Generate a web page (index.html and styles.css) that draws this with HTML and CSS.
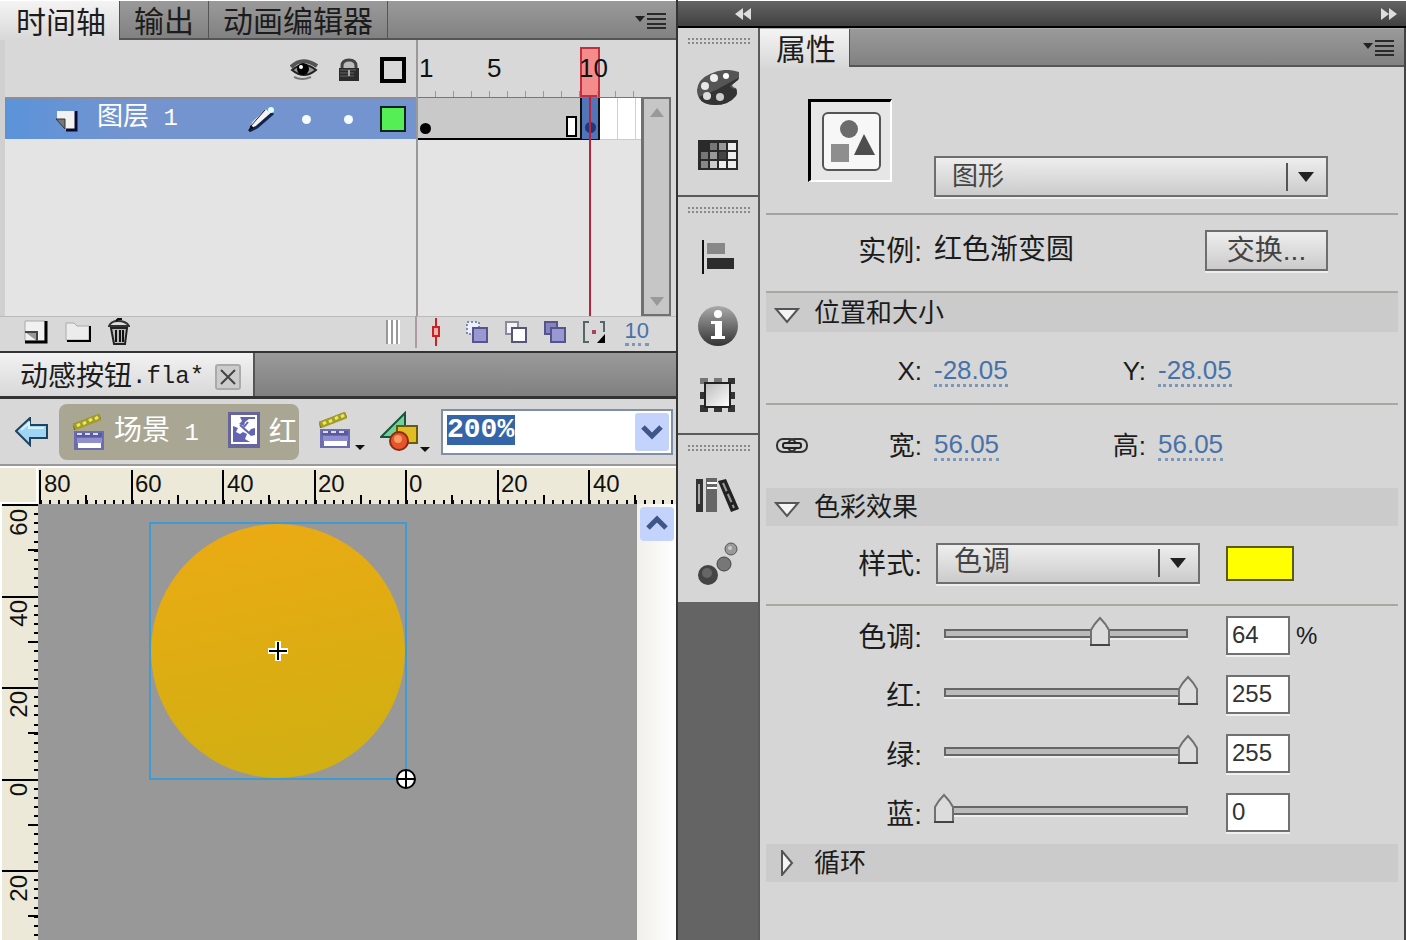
FILE: index.html
```html
<!DOCTYPE html>
<html lang="zh-CN">
<head>
<meta charset="utf-8">
<title>动感按钮.fla*</title>
<link rel="stylesheet" href="styles.css">
</head>
<body>
<svg class="defs" aria-hidden="true">
  <defs>
    <linearGradient id="ball" x1="0" y1="0" x2="0" y2="1"><stop offset="0" stop-color="#aaa"/><stop offset="1" stop-color="#333"/></linearGradient>
    <linearGradient id="paper" x1="0" y1="0" x2="1" y2="1"><stop offset="0" stop-color="#bbb"/><stop offset="1" stop-color="#fff"/></linearGradient>
    <linearGradient id="orange" x1="0" y1="0" x2="0.2" y2="1"><stop offset="0" stop-color="#ecaa13"/><stop offset="1" stop-color="#d2af12"/></linearGradient>
    <symbol id="clapper" viewBox="0 0 32 38">
      <path d="M0 11 26 1l2 5L1 17z" fill="#5d5a12"/>
      <path d="M1 14 27 4" stroke="#a29c28" stroke-width="7"/>
      <path d="M4 13l3-2M10 11l3-2M16 8l3-2M22 6l3-2" stroke="#ece860" stroke-width="3"/>
      <path d="M1 18h30v19H1z" fill="#6c6cb0"/>
      <path d="M3 20h26v4H3z" fill="#5a5aa0"/><path d="M4 21h5M12 21h5M20 21h5" stroke="#dde" stroke-width="2"/>
      <path d="M4 25h25v5H4z" fill="#8f8fd0"/><path d="M5 30h23v5H5z" fill="#fff"/>
    </symbol>
    <symbol id="panel-menu" viewBox="0 0 32 18">
      <path d="M1 4h10L6 10z" fill="#222"/><path d="M13 2h19M13 7h19M13 12h19M13 16h19" stroke="#2a2a2a" stroke-width="2"/>
    </symbol>
  </defs>
</svg>
<div class="app">
  <main class="work">
    <nav class="tabs">
      <button class="tab tab-on">时间轴</button>
      <button class="tab">输出</button>
      <button class="tab">动画编辑器</button>
      <button class="menu" aria-label="面板菜单"><svg width="32" height="18"><use href="#panel-menu"/></svg></button>
    </nav>

    <section class="timeline">
      <div class="layers">
        <div class="layer-head">
          <svg width="28" height="24" viewBox="0 0 28 24"><path d="M1 9Q12-2 27 8" fill="none" stroke="#555" stroke-width="4"/><path d="M2 12Q14 2 26 12Q14 22 2 12z" fill="#999" stroke="#222" stroke-width="2"/><circle cx="13" cy="11" r="6" fill="#000"/><circle cx="11" cy="9" r="2" fill="#fff"/><path d="M4 19Q12 23 21 19" fill="none" stroke="#777" stroke-width="2"/></svg>
          <svg width="22" height="24" viewBox="0 0 22 24"><path d="M4 12V8Q4 2 11 2Q18 2 18 8v4" fill="#bbb" stroke="#444" stroke-width="3"/><path d="M1 10h20v13H1z" fill="#2b2b2b"/><path d="M2 12h16M2 15h14M2 18h14" stroke="#666"/><path d="M11 12v6" stroke="#aaa" stroke-width="2"/></svg>
          <span class="outline-all"></span>
        </div>
        <div class="layer">
          <svg class="c-page" width="24" height="22" viewBox="0 0 24 22"><path d="M2 1h18v19H11L2 9z" fill="#f2f2f2"/><path d="M21 1v19H11" fill="none" stroke="#0a0a30" stroke-width="3"/><path d="M1 9h9v10z" fill="#777" stroke="#333"/></svg>
          <span class="layer-name">图层<span class="digit"> 1</span></span>
          <svg class="c-pen" width="28" height="26" viewBox="0 0 28 26"><path d="M1 25 5 16 19 3l6 5L10 21z" fill="#f4f4f4" stroke="#8ba0c4"/><path d="M2 25 10 21 26 7" fill="none" stroke="#14244c" stroke-width="3"/><path d="M3 21 18 4" stroke="#14244c" stroke-width="1"/><circle cx="24" cy="4" r="3" fill="#dff"/><path d="M1 25l3-6 3 3z" fill="#111"/></svg>
          <span class="dot"></span>
          <span class="dot"></span>
          <span class="swatch-layer"></span>
        </div>
      </div>
      <div class="frames">
        <div class="playhead"></div>
        <div class="frame-head"><span>1</span><span>5</span><span>10</span></div>
        <div class="frame-row">
          <div class="span"><i class="key"></i><i class="end"></i></div>
          <div class="current"><i class="key key-on"></i></div>
          <div class="rest"></div>
        </div>
        <div class="playline"></div>
      </div>
      <div class="scroller">
        <div class="scrollbar"><span class="up"></span><span class="down"></span></div>
      </div>
    </section>

    <div class="timeline-bar">
      <button aria-label="新建图层"><svg width="24" height="24" viewBox="0 0 24 24"><path d="M1 1h20v20H1z" fill="#f1f1f1" stroke="#aaa"/><path d="M22 1v21H1" fill="none" stroke="#000" stroke-width="3"/><path d="M1 12h12v9" fill="#999" stroke="#444" stroke-width="2"/></svg></button>
      <button aria-label="新建文件夹"><svg width="26" height="22" viewBox="0 0 26 22"><path d="M1 19V2h8l3 3h12v14z" fill="#ececec" stroke="#aaa"/><path d="M25 5v15H2" fill="none" stroke="#000" stroke-width="2"/></svg></button>
      <button aria-label="删除"><svg width="22" height="28" viewBox="0 0 22 28"><path d="M3 10h16l-2 16H6z" fill="#bbb" stroke="#222" stroke-width="2"/><path d="M8 12v12M12 12v12M15 12v12" stroke="#111" stroke-width="2"/><path d="M1 8Q3 3 10 3Q18 3 21 8z" fill="#ddd" stroke="#333" stroke-width="2"/><path d="M8 3l2-2h4" stroke="#111" stroke-width="2" fill="none"/></svg></button>
      <span class="bar-space"></span>
      <span class="bar-grip"></span>
      <span class="bar-line"></span>
      <button aria-label="帧居中"><svg width="14" height="28" viewBox="0 0 14 28"><path d="M7 0v28" stroke="#c22" stroke-width="2"/><path d="M4 9h6v9H4z" fill="#f8b0b0" stroke="#c22" stroke-width="2"/></svg></button>
      <button aria-label="绘图纸外观"><svg width="24" height="24" viewBox="0 0 24 24"><path d="M2 2h12v12H2z" fill="#eef" stroke="#7890b0" stroke-width="2" stroke-dasharray="2 2"/><path d="M8 8h14v14H8z" fill="#9a98d4" stroke="#55558a" stroke-width="2"/></svg></button>
      <button aria-label="绘图纸外观轮廓"><svg width="24" height="24" viewBox="0 0 24 24"><path d="M2 2h12v12H2z" fill="#f4f4fa" stroke="#8a8aa0" stroke-width="2"/><path d="M8 8h14v14H8z" fill="#fff" stroke="#55557a" stroke-width="2"/></svg></button>
      <button aria-label="编辑多个帧"><svg width="24" height="24" viewBox="0 0 24 24"><path d="M2 2h12v12H2z" fill="#8583c4" stroke="#55558a" stroke-width="2"/><path d="M8 8h14v14H8z" fill="#9a98d4" stroke="#55558a" stroke-width="2"/></svg></button>
      <button aria-label="修改绘图纸标记"><svg width="24" height="24" viewBox="0 0 24 24"><path d="M7 2H2v20h5M18 2h4v10" fill="none" stroke="#566" stroke-width="2"/><path d="M10 10h4v4h-4z" fill="#a4445e"/><path d="M23 14v9h-8z"/></svg></button>
      <a class="hot frame-no" href="#">10</a>
    </div>

    <nav class="doc-tabs">
      <div class="doc-tab">动感按钮<span class="mono">.fla*</span>
        <button class="close" aria-label="关闭"><svg width="26" height="26" viewBox="0 0 26 26"><rect x="1" y="1" width="24" height="24" rx="2" fill="#ccc" stroke="#aaa" stroke-width="2"/><path d="M6 6l14 14M20 6 6 20" stroke="#444" stroke-width="2"/></svg></button>
      </div>
    </nav>

    <div class="edit-bar">
      <button class="back" aria-label="返回"><svg width="34" height="30" viewBox="0 0 34 30"><path d="M1 14 15 1v7h17v13H15v7z" fill="#9fd6f6" stroke="#23435c" stroke-width="2"/><path d="M6 13l8-7v5h15" fill="none" stroke="#d8f2ff" stroke-width="2"/></svg></button>
      <div class="crumbs">
        <svg width="32" height="38"><use href="#clapper"/></svg>
        <a href="#">场景<span class="digit"> 1</span></a>
        <svg class="crumb-symbol" width="32" height="36" viewBox="0 0 32 36"><path d="M0 0h32v36H0z" fill="#66669c"/><path d="M3 3h26v29H3z" fill="#fff"/><path d="M5 5h22v25H5z" fill="#6464b4"/><path d="M5 5h7l2 4-3 3 5 2 1-4 4-3h6v9l-4 1-3 4 3 3 4-1v7h-5l-5-3 2-5-4-2-3 2-4-2 2-4-5-2z" fill="#fff"/><path d="M12 13l9 8M20 10l-4 5" stroke="#6464b4" stroke-width="2"/></svg>
        <a href="#">红</a>
      </div>
      <button class="scene" aria-label="编辑场景"><svg width="46" height="42" viewBox="0 0 46 42"><use href="#clapper" width="32" height="38"/><path d="M36 34h10l-5 5z" fill="#111"/></svg></button>
      <button aria-label="编辑元件"><svg width="50" height="42" viewBox="0 0 50 42"><path d="M1 26 25 2v24z" fill="#6fd29b" stroke="#17563a" stroke-width="2"/><path d="M17 15h20v17H17z" fill="#e0bd23" stroke="#6d5a08" stroke-width="2"/><circle cx="19" cy="30" r="9" fill="#e8542a" stroke="#8a2a10" stroke-width="2"/><circle cx="18" cy="28" r="4" fill="#f79a63"/><path d="M40 36h10l-5 5z" fill="#111"/></svg></button>
      <div class="zoom">
        <input id="zoom" type="text" value="200%" aria-label="缩放比例">
        <button aria-label="打开缩放列表"><svg width="34" height="38" viewBox="0 0 34 38"><rect width="34" height="38" rx="3" fill="#c3d3fb"/><path d="M8 14l9 9 9-9" fill="none" stroke="#3f5788" stroke-width="5"/></svg></button>
      </div>
    </div>

    <div class="stage">
      <div class="corner"></div>
      <svg class="ruler-h" height="38" shape-rendering="crispEdges" role="img" aria-label="水平标尺">
        <path d="M2 34H800" stroke="#000" stroke-width="5" stroke-dasharray="2 7.15" fill="none"/>
        <path d="M47 32H800" stroke="#000" stroke-width="10" stroke-dasharray="2 89.5" fill="none"/>
        <path d="M1 20H800" stroke="#000" stroke-width="36" stroke-dasharray="2 89.5" fill="none"/>
        <g class="ruler-text"><text x="6" y="24">80</text><text x="97" y="24">60</text><text x="189" y="24">40</text><text x="280" y="24">20</text><text x="371" y="24">0</text><text x="463" y="24">20</text><text x="555" y="24">40</text></g>
      </svg>
      <svg class="ruler-v" width="38" shape-rendering="crispEdges" role="img" aria-label="垂直标尺">
        <path d="M34 0V1000" stroke="#000" stroke-width="5" stroke-dasharray="2 7.15" fill="none"/>
        <path d="M31 45V1000" stroke="#000" stroke-width="10" stroke-dasharray="2 89.5" fill="none"/>
        <path d="M18 0V1000" stroke="#000" stroke-width="36" stroke-dasharray="2 89.5" fill="none"/>
        <g class="ruler-text" text-anchor="end"><text transform="translate(25 5) rotate(-90)">60</text><text transform="translate(25 96) rotate(-90)">40</text><text transform="translate(25 187) rotate(-90)">20</text><text transform="translate(25 279) rotate(-90)">0</text><text transform="translate(25 371) rotate(-90)">20</text></g>
      </svg>
      <div class="canvas">
        <svg class="instance" width="270" height="270" viewBox="0 0 270 270">
          <circle cx="129" cy="129" r="127" fill="url(#orange)"/>
          <path d="M1 1h256v256H1z" fill="none" stroke="#3f9bd0" stroke-width="2"/>
          <path d="M129 119v20M119 129h20" stroke="#fff" stroke-width="6"/><path d="M129 120v18M120 129h18" stroke="#000" stroke-width="2"/>
          <circle cx="257" cy="257" r="9" fill="#fff" stroke="#000" stroke-width="2"/><path d="M257 248v18M248 257h18" stroke="#000" stroke-width="2"/>
        </svg>
      </div>
      <div class="vscroll">
        <button aria-label="向上滚动"><svg width="34" height="34" viewBox="0 0 34 34"><rect width="34" height="34" rx="4" fill="#c3d3fb"/><path d="M8 21l9-9 9 9" fill="none" stroke="#3f5788" stroke-width="5"/></svg></button>
      </div>
    </div>
  </main>

  <header class="dock-bar">
    <button aria-label="展开停放"><svg width="16" height="12" viewBox="0 0 16 12"><path d="M8 0v12L0 6zM16 0v12L8 6z" fill="#ddd"/></svg></button>
    <button aria-label="折叠为图标"><svg width="16" height="12" viewBox="0 0 16 12"><path d="M0 0v12l8-6zM8 0v12l8-6z" fill="#ddd"/></svg></button>
  </header>

  <aside class="dock">
    <div class="group">
      <span class="grip"></span>
      <button aria-label="颜色"><svg width="44" height="36" viewBox="0 0 44 36"><path d="M14 4Q28-3 43 2v7l-7 6q1 3 4 3 2 4 0 7Q33 35 19 35 1 34 1 20 2 9 14 4z" fill="#555"/><path d="M20 20 42 8v2l-8 6q1 3 6 3 2 4 0 7Q33 35 19 35 6 35 3 27z" fill="#333"/><circle cx="9" cy="16" r="4" fill="#e8e8e8"/><circle cx="18" cy="8" r="4" fill="#eee"/><circle cx="30" cy="6" r="3" fill="#fff"/><circle cx="11" cy="26" r="4" fill="#ddd"/><circle cx="24" cy="27" r="4" fill="#ccc"/></svg></button>
      <button class="swatches" aria-label="样本"><svg width="40" height="30" viewBox="0 0 40 30"><path d="M0 0h40v30H0z" fill="#2a2a2a"/><path d="M3 12h7v7H3zM12 3h7v7h-7z" fill="#777"/><path d="M21 3h7v7h-7zM12 12h7v7h-7z" fill="#999"/><path d="M3 21h7v7H3z" fill="#888"/><path d="M30 3h8v7h-8zM30 12h8v7h-8zM30 21h8v7h-8zM21 21h7v7h-7z" fill="#eee"/><path d="M12 21h7v7h-7z" fill="#ccc"/><path d="M21 12h7v7h-7z" fill="#444"/></svg></button>
    </div>
    <div class="group">
      <span class="grip"></span>
      <button aria-label="对齐"><svg width="32" height="34" viewBox="0 0 32 34"><path d="M1 0v34" stroke="#111" stroke-width="2"/><path d="M5 3h18v11H5z" fill="#888"/><path d="M5 18h27v11H5z" fill="#2c2c2c"/></svg></button>
      <button aria-label="信息"><svg width="40" height="40" viewBox="0 0 40 40"><circle cx="20" cy="20" r="20" fill="url(#ball)"/><circle cx="20" cy="8" r="4" fill="#fff"/><path d="M13 15h11v15h3v3H13v-3h4V18h-4z" fill="#fff"/></svg></button>
      <button aria-label="变形"><svg width="36" height="34" viewBox="0 0 36 34"><path d="M0 0h8v6H0zM14 0h8v6h-8z" fill="#777"/><path d="M28 0h7v6h-7zM0 14h6v7H0zM30 14h5v7h-5zM0 27h8v7H0zM14 27h8v7h-8zM28 27h7v7h-7z" fill="#333"/><path d="M5 5h25v24H5z" fill="url(#paper)" stroke="#222" stroke-width="2"/></svg></button>
    </div>
    <div class="group">
      <span class="grip"></span>
      <button aria-label="库"><svg width="44" height="34" viewBox="0 0 44 34"><path d="M0 1h7v33H0z" fill="#333"/><path d="M3 6v20" stroke="#aaa" stroke-width="2"/><path d="M10 0h11v34H10z" fill="#666"/><path d="M11 5h10M11 10h10" stroke="#fff" stroke-width="2"/><path d="M22 3l8-2 13 30-8 3z" fill="#222"/><path d="M27 5l11 25" stroke="#999" stroke-width="2" stroke-dasharray="9 3"/></svg></button>
      <button aria-label="动画预设"><svg width="40" height="44" viewBox="0 0 40 44"><circle cx="33" cy="7" r="6" fill="#999" stroke="#555"/><circle cx="32" cy="6" r="2" fill="#ccc"/><circle cx="26" cy="22" r="7" fill="#777" stroke="#444"/><circle cx="10" cy="33" r="10" fill="#444"/><circle cx="9" cy="31" r="5" fill="#666"/></svg></button>
    </div>
  </aside>

  <section class="props">
    <nav class="tabs tabs-props">
      <button class="tab tab-on">属性</button>
      <button class="menu" aria-label="面板菜单"><svg width="32" height="18"><use href="#panel-menu"/></svg></button>
    </nav>
    <form class="panel">
      <div class="hero">
        <div class="thumb"><svg width="60" height="60" viewBox="0 0 60 60"><rect x="1" y="1" width="57" height="57" rx="5" fill="#f7f7f7" stroke="#555" stroke-width="2"/><circle cx="27" cy="17" r="9" fill="#6c6c6c"/><path d="M9 32h18v18H9z" fill="#8e8e8e"/><path d="M42 22 53 43H32z" fill="#4e4e4e"/></svg></div>
        <select class="pick" aria-label="实例行为"><option>图形</option></select>
      </div>
      <div class="row row-instance">
        <span class="label">实例:</span>
        <span class="value">红色渐变圆</span>
        <button type="button" class="swap">交换...</button>
      </div>
      <h2 class="section ruled"><svg width="26" height="16" viewBox="0 0 26 16"><path d="M2 1h22L13 14z" fill="#f4f4f4" stroke="#555" stroke-width="2"/></svg>位置和大小</h2>
      <div class="row row-pair row-xy">
        <span class="label">X:</span><a class="hot" href="#">-28.05</a>
        <span class="label">Y:</span><a class="hot" href="#">-28.05</a>
      </div>
      <div class="row row-pair row-wh">
        <span class="label linked"><svg width="34" height="18" viewBox="0 0 34 18"><rect x="2" y="2" width="19" height="13" rx="6" fill="none" stroke="#333" stroke-width="2"/><rect x="13" y="2" width="19" height="13" rx="6" fill="none" stroke="#333" stroke-width="2"/><rect x="8" y="6" width="18" height="5" rx="2" fill="#ccc" stroke="#222" stroke-width="2"/></svg>宽:</span><a class="hot" href="#">56.05</a>
        <span class="label">高:</span><a class="hot" href="#">56.05</a>
      </div>
      <h2 class="section"><svg width="26" height="16" viewBox="0 0 26 16"><path d="M2 1h22L13 14z" fill="#f4f4f4" stroke="#555" stroke-width="2"/></svg>色彩效果</h2>
      <div class="row row-style">
        <label class="label" for="style">样式:</label>
        <select class="pick" id="style"><option>色调</option></select>
        <button type="button" class="tint" aria-label="着色颜色"></button>
      </div>
      <div class="sliders">
        <div class="row row-slider"><label class="label" for="tint">色调:</label><input class="range" id="tint" type="range" max="100" value="64"><input class="num" type="text" value="64" aria-label="色调数值"><span class="unit">%</span></div>
        <div class="row row-slider"><label class="label" for="red">红:</label><input class="range" id="red" type="range" max="255" value="255"><input class="num" type="text" value="255" aria-label="红数值"></div>
        <div class="row row-slider"><label class="label" for="green">绿:</label><input class="range" id="green" type="range" max="255" value="255"><input class="num" type="text" value="255" aria-label="绿数值"></div>
        <div class="row row-slider"><label class="label" for="blue">蓝:</label><input class="range" id="blue" type="range" max="255" value="0"><input class="num" type="text" value="0" aria-label="蓝数值"></div>
      </div>
      <h2 class="section section-shut"><svg width="26" height="26" viewBox="0 0 26 26"><path d="M8 1v24L18 13z" fill="#f4f4f4" stroke="#555" stroke-width="2"/></svg>循环</h2>
    </form>
  </section>
</div>
</body>
</html>
```
FILE: styles.css
```css
* { box-sizing: border-box; }
body {
  margin: 0;
  font-family: "Liberation Sans", "Noto Sans CJK SC", sans-serif;
  font-size: 28px;
  line-height: 32px;
  color: #1c1c1c;
  background: #646464;
}
button, input, select { font: inherit; color: inherit; margin: 0; padding: 0; border: 0; background: none; border-radius: 0; }
button { display: flex; align-items: center; justify-content: center; }
svg { display: block; flex: none; }
.defs { position: absolute; width: 0; height: 0; }

.app {
  display: grid;
  grid-template-columns: minmax(0, 678fr) 82px minmax(0, 646fr);
  grid-template-rows: 28px 1fr;
  height: 100vh;
  overflow: hidden;
}
.work { grid-row: 1 / 3; display: flex; flex-direction: column; min-height: 0; background: #d8d8d8; border-right: 2px solid #333; }
.dock-bar {
  grid-column: 2 / 4;
  display: flex; justify-content: space-between; align-items: center;
  padding: 0 9px 0 57px;
  background: linear-gradient(#646464, #414141);
  border-top: 1px solid #fff; border-bottom: 2px solid #000;
}

/* tab strips */
.tabs { display: flex; height: 40px; flex: none; border-top: 1px solid #fff; background: linear-gradient(#9a9a9a, #808080); }
.tab { padding: 4px 14px 0; font-size: 30px; border-right: 1px solid #555; border-bottom: 2px solid #555; }
.tab-on { padding: 4px 13px 0 16px; background: linear-gradient(#f4f4f4, #d8d8d8); border-bottom: 0; }
.menu { flex: 1; justify-content: flex-end; padding: 2px 10px 0 0; border-bottom: 2px solid #555; }
.tabs-props { border-top-color: #aaa; }

/* timeline */
.timeline { display: flex; height: 276px; flex: none; }
.layers { flex: 1; background: #e4e4e4; border-left: 5px solid #d0d0d0; }
.layer-head, .layer { display: flex; align-items: center; justify-content: flex-end; padding-right: 10px; }
.layer-head { height: 57px; gap: 20px; background: #d8d8d8; padding-top: 3px; }
.outline-all { width: 26px; height: 26px; border: 4px solid #000; }
.layer { height: 42px; gap: 33px; background: linear-gradient(90deg, #5b93da, #7394cf 30%); border-top: 2px solid #888da0; }
.layer-name { flex: 1; color: #fff; font-size: 26px; padding-bottom: 4px; }
.digit { font-family: "Liberation Mono", monospace; font-size: 24px; }
.c-page { margin: 4px -15px 0 50px; }
.c-pen { margin-right: -6px; }
.dot { width: 9px; height: 9px; border-radius: 5px; background: #f6fbff; }
.swatch-layer { width: 26px; height: 26px; margin-left: -6px; background: #55ef55; border: 2px solid #122; }
.frames { position: relative; width: 225px; border-left: 2px solid #999; background: linear-gradient(#d8d8d8 57px, #e4e4e4 57px); }
.frame-head {
  position: relative;
  display: grid; grid-template-columns: 68px 92px 1fr; height: 57px; padding: 12px 0 0 1px;
  font-size: 26px; color: #111;
  background: repeating-linear-gradient(90deg, transparent 0 17px, #999 17px 18px) 0 100% / 100% 6px no-repeat;
}
.frame-row { display: flex; height: 43px; border-top: 1px solid #777; }
.span { display: flex; justify-content: space-between; align-items: flex-end; width: 162px; padding: 0 3px 1px 2px; background: #c9c9c9; border-bottom: 2px solid #000; }
.key { width: 11px; height: 11px; margin-bottom: 3px; border-radius: 6px; background: #000; }
.end { width: 11px; height: 21px; border: 2px solid #000; background: #fff; }
.current { display: flex; align-items: flex-end; justify-content: center; width: 20px; padding-bottom: 3px; background: #5274b8; border: solid #111; border-width: 0 2px 1px; }
.key-on { background: #223878; }
.rest { flex: 1; background: repeating-linear-gradient(90deg, #fff 0 17px, #d0d0d0 17px 18px); border-bottom: 1px solid #ccc; }
.playhead { position: absolute; left: 162px; top: 7px; width: 20px; height: 50px; border: 2px solid #c03040; background: #f48c8c; }
.playline { position: absolute; left: 171px; top: 57px; bottom: 0; width: 2px; background: #b8243a; }
.scroller { width: 35px; padding: 57px 5px 0 0; }
.scrollbar { display: flex; flex-direction: column; justify-content: space-between; align-items: center; height: 100%; padding: 9px 0 8px; background: #c6c6c6; border: 2px solid #707070; border-left-width: 3px; }
.up, .down { border: 7px solid transparent; }
.up { border-top: 0; border-bottom: 9px solid #999; }
.down { border-bottom: 0; border-top: 9px solid #999; }
.timeline-bar { display: flex; align-items: center; flex: none; height: 37px; padding: 0 27px 4px 24px; gap: 15px; border-top: 1px solid #bbb; border-bottom: 2px solid #333; }
.timeline-bar button + button { margin-left: 2px; }
.bar-space { flex: 1; }
.bar-grip { width: 14px; height: 24px; background: repeating-linear-gradient(90deg, #999 0 2px, #fff 2px 5px); }
.bar-line { width: 2px; height: 32px; margin-right: -3px; background: #b09aa4; }
.timeline-bar .bar-line + button + button { margin-left: 7px; }
.timeline-bar button:nth-child(n+9) { margin-left: 0; }
.hot { color: #4672a8; font-size: 26px; line-height: 28px; text-decoration: none; border-bottom: 3px dotted #7d97b8; }
.frame-no { margin-left: 4px; font-size: 22px; line-height: 24px; }

/* document */
.doc-tabs { display: flex; flex: none; height: 46px; background: linear-gradient(#9a9a9a, #808080); border-bottom: 3px solid #333; }
.doc-tab { display: flex; align-items: center; padding: 4px 12px 0 20px; background: linear-gradient(#f2f2f2, #d8d8d8); border-right: 2px solid #555; }
.mono { font-family: "Liberation Mono", monospace; font-size: 24px; }
.close { margin-left: 11px; }
.edit-bar { display: flex; align-items: center; flex: none; height: 67px; padding: 0 3px 0 15px; border-bottom: 2px solid #999; background: #d8d8d8; }
.crumbs { display: flex; align-items: center; flex: 1; height: 56px; margin: 0 20px 0 10px; padding-left: 14px; gap: 9px; border-radius: 8px; background: #a9a794; }
.crumbs a { padding-top: 2px; color: #fff; text-decoration: none; white-space: nowrap; }
.crumb-symbol { margin: 0 0 4px 20px; }
.scene { margin-right: 15px; }
.zoom { display: flex; align-items: center; justify-content: space-between; width: 232px; height: 46px; margin-left: 11px; padding: 0 2px 0 4px; background: #fff; border: 2px solid #7f8fa6; }
.zoom input { width: 68px; height: 30px; margin-bottom: 4px; background: #3465a8; color: #fff; font-family: "Liberation Mono", monospace; font-weight: bold; }

.stage { display: grid; grid-template: 38px minmax(0, 1fr) / 38px minmax(0, 1fr) 39px; flex: 1; min-height: 0; }
.corner { background: #ece9d8; border: solid #fff; border-width: 2px 2px 2px 0; }
.ruler-h { grid-column: 2 / 4; width: 100%; background: #ece9d8; border-top: 2px solid #fff; }
.ruler-v { height: 100%; background: #ece9d8; border-left: 2px solid #fff; }
.ruler-text { font-size: 24px; fill: #111; }
.canvas { position: relative; overflow: hidden; background: #989898; }
.instance { position: absolute; left: 111px; top: 18px; }
.vscroll { display: flex; align-items: flex-start; justify-content: center; padding-top: 3px; background: linear-gradient(90deg, #f0efea, #fff); }

/* icon dock */
.dock { border-right: 2px solid #5a5a5a; }
.group { display: flex; flex-direction: column; padding: 10px 8px 4px; background: #d6d6d6; border-bottom: 2px solid #5a5a5a; }
.group:last-child { border-bottom: 0; }
.grip { height: 8px; margin-bottom: 7px; background: conic-gradient(#888 25%, transparent 0) 0 0 / 4px 4px; }
.group button { height: 69px; }
.group .swatches { padding-bottom: 4px; }

/* properties */
.props { min-width: 0; display: flex; flex-direction: column; background: #d6d6d6; border-right: 2px solid #444; }
.props .tabs { height: 39px; }
.panel { padding: 0 6px; }
.hero { display: flex; align-items: flex-start; height: 148px; padding: 32px 70px 0 42px; gap: 42px; border-bottom: 2px solid #a4a4a4; }
.thumb { padding: 10px 8px 8px 11px; background: #e6e6e6; border: solid #fff; border-width: 3px 2px 2px 3px; border-top-color: #000; border-left-color: #000; }
.pick {
  appearance: none; flex: 1; height: 41px; padding: 0 48px 2px 16px; font-size: 26px; color: #444;
  border: 2px solid #6e6e6e; box-shadow: 0 2px #eee;
  background:
    url("data:image/svg+xml,%3Csvg xmlns='http://www.w3.org/2000/svg' width='40' height='30'%3E%3Cpath d='M1 1v28' stroke='%23555' stroke-width='2'/%3E%3Cpath d='M12 10h16l-8 10z' fill='%23222'/%3E%3C/svg%3E") right center no-repeat,
    linear-gradient(#eee, #cbcbcb);
}
.hero .pick { margin-top: 57px; }
.row { display: grid; align-items: center; column-gap: 12px; }
.label { text-align: right; }
.row-instance { grid-template-columns: 156px 1fr 123px; height: 76px; padding-right: 70px; padding-bottom: 6px; }
.row-instance .label, .row-style .label, .row-slider .label { padding-top: 4px; }
.swap { height: 41px; padding-top: 2px; color: #444; border: 2px solid #6e6e6e; box-shadow: 0 2px #eee; background: linear-gradient(#eee, #cbcbcb); }
.section { display: flex; align-items: center; gap: 14px; height: 38px; margin: 0; padding-left: 8px; font-size: 26px; font-weight: normal; background: #cbcbcb; }
.section svg { margin-top: 6px; }
.section-shut svg { margin-top: 0; }
.ruled { height: 41px; border-top: 2px solid #a6a8a2; }
.row-pair { grid-template-columns: 156px 128px 72px 1fr; justify-items: start; }
.row-pair .label { justify-self: stretch; font-size: 26px; }
.row-xy { height: 73px; padding-top: 7px; border-bottom: 2px solid #a6a8a2; }
.row-wh { height: 83px; padding-bottom: 2px; }
.linked { display: flex; justify-content: space-between; align-items: center; padding-left: 9px; }
.row-style { grid-template-columns: 156px minmax(0, 264px) 68px; height: 80px; padding-bottom: 4px; column-gap: 14px; border-bottom: 2px solid #a6a8a2; }
.row-style .tint { height: 35px; margin-left: 12px; width: 68px; background: #ffff00; border: 2px solid #5a5a10; }
.row-style .pick { font-size: 28px; }
.sliders { padding-bottom: 2px; }
.row-slider { grid-template-columns: 156px minmax(0, 268px) 64px auto; column-gap: 10px; height: 59px; justify-content: start; }
.range {
  appearance: none; width: 100%; height: 40px; outline: 0;
  background:
    linear-gradient(#666, #666) 12px 13px / 2px 9px no-repeat,
    linear-gradient(#666, #666) right 12px top 13px / 2px 9px no-repeat,
    linear-gradient(#666 2px, #bbb 2px 7px, #666 7px 9px, #eee 9px) center 13px / calc(100% - 24px) 11px no-repeat;
}
.range::-webkit-slider-thumb {
  appearance: none; width: 24px; height: 40px;
  background: url("data:image/svg+xml,%3Csvg xmlns='http://www.w3.org/2000/svg' width='24' height='40'%3E%3Cpath d='M12 2Q18 8 21 14v15H3V14Q6 8 12 2z' fill='%23dcdcdc' stroke='%23707070' stroke-width='2'/%3E%3Cpath d='M2 29h20' stroke='%23444' stroke-width='2'/%3E%3C/svg%3E") center no-repeat;
}
.num { width: 64px; height: 39px; margin-left: 16px; padding: 0 4px 2px; font-size: 24px; color: #333; background: #fff; border: 2px solid #707070; box-shadow: 0 2px #f0f0f0; }
.unit { margin-left: 12px; font-size: 24px; }
```
